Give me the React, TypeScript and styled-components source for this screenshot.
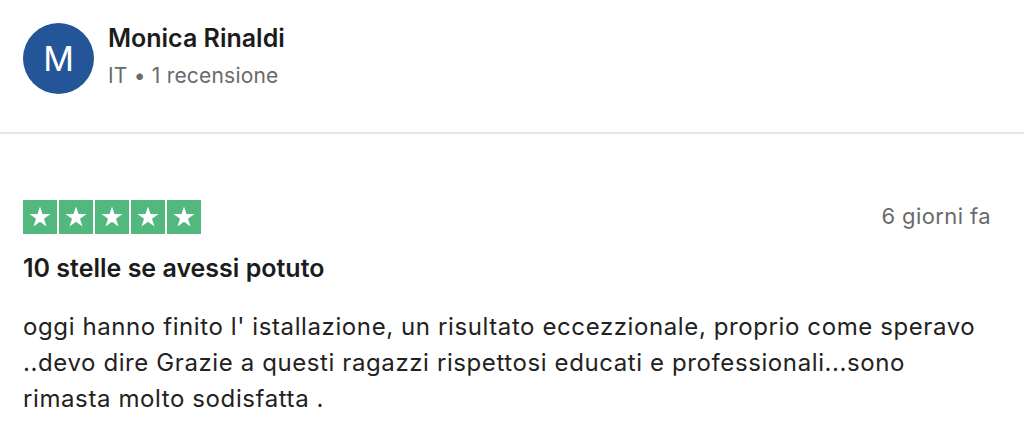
import styled, { createGlobalStyle } from 'styled-components';

const GlobalStyle = createGlobalStyle`
	html, body {
		margin: 0;
		padding: 0;
		background: #ffffff;
	}
	body {
		font-family: Inter, 'Liberation Sans', sans-serif;
		color: #1c1c1c;
	}
`;

const Card = styled.article`
	width: 1024px;
	height: 442px;
	overflow: hidden;
	background: #ffffff;
`;

const Header = styled.header`
	display: flex;
	align-items: flex-start;
	gap: 14px;
	padding: 23px 23px 38px;
	border-bottom: 2px solid #e7e7e3;
`;

const Avatar = styled.div`
	width: 71px;
	height: 71px;
	border-radius: 50%;
	background: #245598;
	color: #ffffff;
	display: flex;
	align-items: center;
	justify-content: center;
	font-size: 34px;
	font-weight: 400;
	flex-shrink: 0;
`;

const Consumer = styled.div`
	display: flex;
	flex-direction: column;
	gap: 10px;
`;

const Name = styled.span`
	font-size: 25px;
	font-weight: 600;
	line-height: 30px;
	color: #1c1c1c;
`;

const Meta = styled.span`
	font-size: 21px;
	letter-spacing: 0.2px;
	line-height: 26px;
	color: #696a6a;
`;

const Body = styled.section`
	padding: 66px 33px 0 23px;
`;

const TopRow = styled.div`
	display: flex;
	align-items: center;
	justify-content: space-between;
`;

const Stars = styled.div`
	display: flex;
	gap: 2px;
`;

const StarBox = styled.span<{ $filled: boolean }>`
	width: 34px;
	height: 34px;
	background: ${p => (p.$filled ? '#52b87e' : '#dcdce6')};
	display: flex;
	align-items: center;
	justify-content: center;
`;

const Date = styled.time`
	font-size: 22px;
	letter-spacing: 0.4px;
	line-height: 26px;
	color: #696a6a;
	margin-top: -2px;
`;

const Title = styled.h2`
	margin: 19px 0 0;
	font-size: 25px;
	font-weight: 600;
	line-height: 30px;
	color: #1c1c1c;
`;

const Text = styled.p`
	margin: 26px 0 0;
	max-width: 962px;
	font-size: 24px;
	letter-spacing: 0.6px;
	line-height: 36px;
	color: #222222;
`;

const Star = () => (
	<svg width="26" height="26" viewBox="0 0 24 24">
		<path
			fill="#ffffff"
			d="M12 2.2l2.3 7.1h7.4l-6 4.4 2.3 7.1-6-4.4-6 4.4 2.3-7.1-6-4.4h7.4z"
		/>
	</svg>
);

export default function App() {
	const rating = 5;
	return (
		<Card>
			<GlobalStyle />
			<Header>
				<Avatar>M</Avatar>
				<Consumer>
					<Name>Monica Rinaldi</Name>
					<Meta>IT • 1 recensione</Meta>
				</Consumer>
			</Header>
			<Body>
				<TopRow>
					<Stars>
						{[0, 1, 2, 3, 4].map(i => (
							<StarBox key={i} $filled={i < rating}>
								<Star />
							</StarBox>
						))}
					</Stars>
					<Date>6 giorni fa</Date>
				</TopRow>
				<Title>10 stelle se avessi potuto</Title>
				<Text>
					oggi hanno finito l' istallazione, un risultato eccezzionale, proprio come speravo
					..devo dire Grazie a questi ragazzi rispettosi educati e professionali...sono
					rimasta molto sodisfatta .
				</Text>
			</Body>
		</Card>
	);
}
